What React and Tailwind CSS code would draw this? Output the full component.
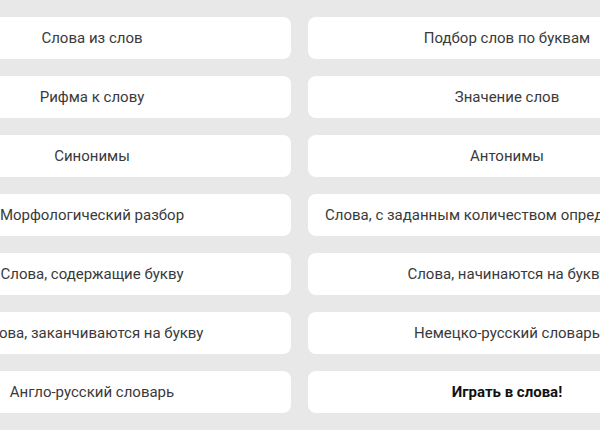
const items = [
  ['Слова из слов', 'Подбор слов по буквам'],
  ['Рифма к слову', 'Значение слов'],
  ['Синонимы', 'Антонимы'],
  ['Морфологический разбор', 'Слова, с заданным количеством определённых букв'],
  ['Слова, содержащие букву', 'Слова, начинаются на букву'],
  ['Слова, заканчиваются на букву', 'Немецко-русский словарь'],
  ['Англо-русский словарь', 'Играть в слова!'],
]

function Tile({ label, bold }) {
  return (
    <a
      href="#"
      className={
        'block h-[42px] overflow-hidden whitespace-nowrap rounded-lg bg-white px-[17px] text-center text-[15px] leading-[42px] ' +
        (bold ? 'font-bold text-[#111]' : 'text-[#3a3a3a]')
      }
    >
      {label}
    </a>
  )
}

export default function App() {
  return (
    <div className="h-[430px] w-[600px] overflow-hidden bg-[#e8e8e9]" style={{ fontFamily: 'Roboto, "Noto Sans", sans-serif' }}>
      <div className="ml-[-107px] grid w-[813px] grid-cols-2 gap-x-[17px] gap-y-[17px] pt-[17px]">
        {items.flatMap(([a, b], i) => [
          <Tile key={'a' + i} label={a} />,
          <Tile key={'b' + i} label={b} bold={b === 'Играть в слова!'} />,
        ])}
      </div>
    </div>
  )
}
